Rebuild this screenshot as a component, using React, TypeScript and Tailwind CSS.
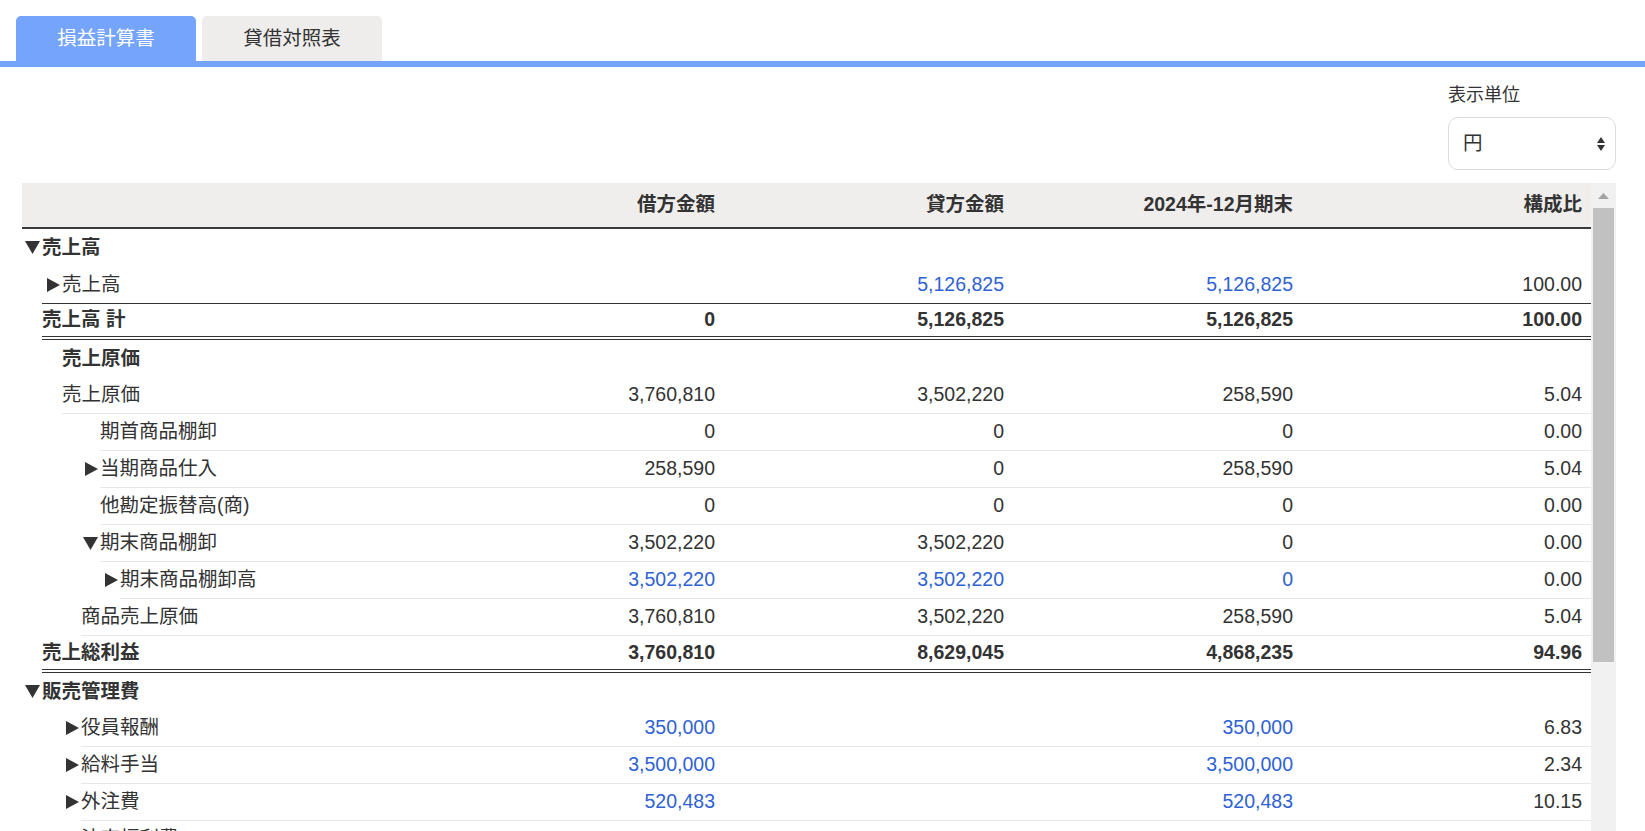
import React from "react";

type Cell = { v: string; blue?: boolean };
type Row = {
  label: string;
  level: 0 | 1 | 2 | 3 | 4;
  arrow?: "down" | "right";
  bold?: boolean;
  cells?: Cell[];
  border?: "light" | "none" | "total" | "double";
};

const indentClass: Record<number, string> = {
  0: "pl-[20px]",
  1: "pl-[40px]",
  2: "pl-[59px]",
  3: "pl-[78px]",
  4: "pl-[98px]",
};

const d = (v: string): Cell => ({ v });
const b = (v: string): Cell => ({ v, blue: true });

const rows: Row[] = [
  { label: "売上高", level: 0, arrow: "down", bold: true, border: "none" },
  { label: "売上高", level: 1, arrow: "right", cells: [d(""), b("5,126,825"), b("5,126,825"), d("100.00")], border: "none" },
  { label: "売上高 計", level: 0, bold: true, cells: [d("0"), d("5,126,825"), d("5,126,825"), d("100.00")], border: "total" },
  { label: "売上原価", level: 1, bold: true, border: "none" },
  { label: "売上原価", level: 1, cells: [d("3,760,810"), d("3,502,220"), d("258,590"), d("5.04")], border: "light" },
  { label: "期首商品棚卸", level: 3, cells: [d("0"), d("0"), d("0"), d("0.00")], border: "light" },
  { label: "当期商品仕入", level: 3, arrow: "right", cells: [d("258,590"), d("0"), d("258,590"), d("5.04")], border: "light" },
  { label: "他勘定振替高(商)", level: 3, cells: [d("0"), d("0"), d("0"), d("0.00")], border: "light" },
  { label: "期末商品棚卸", level: 3, arrow: "down", cells: [d("3,502,220"), d("3,502,220"), d("0"), d("0.00")], border: "light" },
  { label: "期末商品棚卸高", level: 4, arrow: "right", cells: [b("3,502,220"), b("3,502,220"), b("0"), d("0.00")], border: "light" },
  { label: "商品売上原価", level: 2, cells: [d("3,760,810"), d("3,502,220"), d("258,590"), d("5.04")], border: "light" },
  { label: "売上総利益", level: 0, bold: true, cells: [d("3,760,810"), d("8,629,045"), d("4,868,235"), d("94.96")], border: "double" },
  { label: "販売管理費", level: 0, arrow: "down", bold: true, border: "none" },
  { label: "役員報酬", level: 2, arrow: "right", cells: [b("350,000"), d(""), b("350,000"), d("6.83")], border: "light" },
  { label: "給料手当", level: 2, arrow: "right", cells: [b("3,500,000"), d(""), b("3,500,000"), d("2.34")], border: "light" },
  { label: "外注費", level: 2, arrow: "right", cells: [b("520,483"), d(""), b("520,483"), d("10.15")], border: "light" },
  { label: "法定福利費", level: 2, arrow: "right", cells: [b("512,874"), d(""), b("512,874"), d("10.00")], border: "light" },
];

function Arrow({ dir }: { dir: "down" | "right" }) {
  return (
    <span className="inline-flex w-[17px] -ml-[17px] shrink-0 items-center">
      {dir === "down" ? (
        <svg width="15" height="13" viewBox="0 0 15 13">
          <polygon points="0,0 15,0 7.5,13" fill="#333" />
        </svg>
      ) : (
        <svg width="13" height="14" viewBox="0 0 13 14" className="ml-[2px]">
          <polygon points="0,0 13,7 0,14" fill="#333" />
        </svg>
      )}
    </span>
  );
}

function borderClass(border: Row["border"]) {
  switch (border) {
    case "light":
      return "border-b border-b-[#e7e7e7]";
    case "total":
      return "border-t border-t-[#333] border-b-4 border-double border-b-[#333]";
    case "double":
      return "border-b-4 border-double border-b-[#333]";
    default:
      return "";
  }
}

function DataRow({ row }: { row: Row }) {
  const cells = row.cells ?? [d(""), d(""), d(""), d("")];
  return (
    <div className={`flex h-[37px] shrink-0 ${indentClass[row.level]}`}>
      <div className={`flex flex-1 items-center ${borderClass(row.border)}`}>
        <div className={`flex flex-1 items-center whitespace-nowrap ${row.bold ? "font-bold" : ""}`}>
          {row.arrow && <Arrow dir={row.arrow} />}
          <span>{row.label}</span>
        </div>
        {cells.map((c, i) => (
          <div
            key={i}
            className={`w-[289px] shrink-0 pr-[9px] text-right ${row.bold ? "font-bold" : ""} ${
              c.blue ? "text-[#2f62d3]" : "text-[#333]"
            }`}
          >
            {c.v}
          </div>
        ))}
      </div>
    </div>
  );
}

export default function App() {
  return (
    <div
      className="flex h-screen flex-col overflow-hidden bg-white text-[19.5px] text-[#333]"
      style={{ fontFamily: '"Liberation Sans", Arial, "Noto Sans CJK JP", sans-serif' }}
    >
      {/* Tabs */}
      <div className="flex gap-[6px] pl-[16px] pt-[16px]">
        <div className="flex h-[45px] w-[180px] items-center justify-center rounded-t-[5px] bg-[#74a4fc] text-white">
          損益計算書
        </div>
        <div className="flex h-[45px] w-[180px] items-center justify-center rounded-t-[5px] bg-[#eeedec] text-[#333]">
          貸借対照表
        </div>
      </div>
      <div className="h-[6px] shrink-0 bg-[#74a4fc]" />

      {/* Unit selector */}
      <div className="flex justify-end pr-[29px] pt-[16px]">
        <div className="flex w-[168px] flex-col">
          <div className="h-[24px] text-[18px] leading-[24px]">表示単位</div>
          <div className="mt-[10px] flex h-[53px] items-center justify-between rounded-[10px] border border-[#dcdcdc] pl-[14px] pr-[10px]">
            <span>円</span>
            <svg width="8" height="14" viewBox="0 0 8 14">
              <polygon points="4,0 8,6 0,6" fill="#333" />
              <polygon points="0,8 8,8 4,14" fill="#333" />
            </svg>
          </div>
        </div>
      </div>

      {/* Table area */}
      <div className="mt-[13px] flex min-h-0 flex-1 pl-[22px] pr-[29px]">
        <div className="flex min-w-0 flex-1 flex-col overflow-hidden">
          <div className="flex h-[46px] shrink-0 items-center border-b-2 border-b-[#3a3a3a] bg-[#efeeed] pb-[1px] font-bold">
            <div className="flex-1" />
            <div className="w-[289px] shrink-0 pr-[9px] text-right">借方金額</div>
            <div className="w-[289px] shrink-0 pr-[9px] text-right">貸方金額</div>
            <div className="w-[289px] shrink-0 pr-[9px] text-right">2024年-12月期末</div>
            <div className="w-[289px] shrink-0 pr-[9px] text-right">構成比</div>
          </div>
          {rows.map((r, i) => (
            <DataRow key={i} row={r} />
          ))}
        </div>
        {/* Scrollbar */}
        <div className="flex w-[25px] shrink-0 flex-col items-center bg-[#f1f1f1]">
          <svg width="11" height="6" viewBox="0 0 11 6" className="mt-[10px]">
            <polygon points="5.5,0 11,6 0,6" fill="#a3a3a3" />
          </svg>
          <div className="mt-[9px] h-[454px] w-[21px] bg-[#c1c1c1]" />
        </div>
      </div>
    </div>
  );
}
